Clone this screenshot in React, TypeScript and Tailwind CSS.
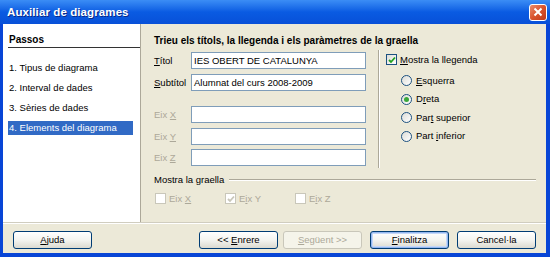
import React from "react";

const font = "font-['Liberation_Sans',Arial,sans-serif]";

function U({ children }: { children: React.ReactNode }) {
  return <span className="underline underline-offset-[1px]">{children}</span>;
}

function Check({ checked, disabled }: { checked?: boolean; disabled?: boolean }) {
  return (
    <span
      className={
        "w-[11px] h-[11px] border flex items-center justify-center shrink-0 " +
        (disabled ? "border-[#c9c7ba] bg-white" : "border-[#1c5180] bg-gradient-to-br from-[#dcdcd7] to-white")
      }
    >
      {checked && (
        <svg width="8" height="8" viewBox="0 0 8 8">
          <path d="M1 4 L3 6 L7 1.5" fill="none" stroke={disabled ? "#c9c7ba" : "#21a121"} strokeWidth="1.8" />
        </svg>
      )}
    </span>
  );
}

function Radio({ checked, label }: { checked?: boolean; label: React.ReactNode }) {
  return (
    <div className="flex items-center h-[13px]">
      <span className="w-[11px] h-[11px] rounded-full border border-[#1c5180] bg-gradient-to-br from-[#dcdcd7] to-white flex items-center justify-center">
        {checked && <span className="w-[5px] h-[5px] rounded-full bg-[#3aa83a]" />}
      </span>
      <span className="ml-[4px] text-[#000]">{label}</span>
    </div>
  );
}

function Field({ label, value, disabled, className }: { label: React.ReactNode; value?: string; disabled?: boolean; className?: string }) {
  return (
    <div className={"flex items-center h-[17px] " + (className ?? "")}>
      <span className={"w-[37px] " + (disabled ? "text-[#aca899]" : "text-black")}>{label}</span>
      <div className="w-[175px] h-[17px] border border-[#7f9db9] bg-white flex items-center px-[2px] text-black">{value}</div>
    </div>
  );
}

function Btn({ children, disabled, focus }: { children: React.ReactNode; disabled?: boolean; focus?: boolean }) {
  return (
    <div
      className={
        "w-[79px] h-[18px] rounded-[3px] border flex items-center justify-center " +
        (disabled
          ? "border-[#c9c7ba] bg-[#f5f4ea] text-[#aca899]"
          : "border-[#003c74] bg-gradient-to-b from-white via-[#f4f4f0] to-[#dcdad0] text-black") +
        (focus ? " shadow-[inset_0_0_0_1px_#94b7f0,inset_0_0_0_2px_#c4d7f7]" : "")
      }
    >
      {children}
    </div>
  );
}

export default function App() {
  return (
    <div className={"w-[550px] h-[257px] flex flex-col bg-[#0845d6] text-[9.5px] leading-[12px] " + font}>
      {/* title bar */}
      <div className="h-[24px] shrink-0 flex items-center pl-[7px] pr-[3px] bg-gradient-to-b from-[#3b8df5] via-[#0a5be2] to-[#0850d8]">
        <span className="text-white text-[11.5px] font-bold tracking-[0.1px] [text-shadow:1px_1px_0_#0a2a8a]">Auxiliar de diagrames</span>
        <div className="ml-auto w-[18px] h-[17px] rounded-[3px] border border-white bg-gradient-to-br from-[#e98b6b] via-[#d9532d] to-[#c0391a] flex items-center justify-center">
          <svg width="10" height="10" viewBox="0 0 10 10">
            <path d="M1.5 1.5 L8.5 8.5 M8.5 1.5 L1.5 8.5" stroke="white" strokeWidth="2" />
          </svg>
        </div>
      </div>

      {/* body */}
      <div className="flex-1 flex flex-col ml-[3px] mr-[4px] mb-[4px] bg-[#ece9d8]">
        <div className="h-[198px] flex">
          {/* steps */}
          <div className="w-[138px] bg-white border-r border-[#aca899] pl-[5px] pr-[7px]">
            <div className="mt-[10px] pl-[1px] font-bold text-[10px] text-black border-b border-[#333] pb-[1px] -mr-[7px]">Passos</div>
            <div className="mt-[13px] pl-[1px] h-[14px] flex items-center text-black">1. Tipus de diagrama</div>
            <div className="mt-[6px] pl-[1px] h-[14px] flex items-center text-black">2. Interval de dades</div>
            <div className="mt-[6px] pl-[1px] h-[14px] flex items-center text-black">3. Sèries de dades</div>
            <div className="mt-[6px] pl-[1px] h-[14px] flex items-center text-white bg-[#316ac5]">4. Elements del diagrama</div>
          </div>

          {/* settings */}
          <div className="flex-1 pl-[13px] pr-[10px]">
            <div className="mt-[11px] h-[12px] font-bold text-[10px] text-black">
              Trieu els títols, la llegenda i els paràmetres de la graella
            </div>
            <div className="flex mt-[5px]">
              <div className="flex flex-col">
                <Field label={<><U>T</U>ítol</>} value="IES OBERT DE CATALUNYA" />
                <Field className="mt-[5px]" label={<><U>S</U>ubtítol</>} value="Alumnat del curs 2008-2009" />
                <Field className="mt-[15px]" disabled label={<>Eix <U>X</U></>} />
                <Field className="mt-[5px]" disabled label={<>Eix <U>Y</U></>} />
                <Field className="mt-[4px]" disabled label={<>Eix <U>Z</U></>} />
              </div>
              <div className="ml-[12px] -mt-[2px] h-[118px] w-[2px] border-l border-[#aca899] border-r border-r-white" />
              <div className="ml-[6px] flex flex-col">
                <div className="flex items-center h-[13px] mt-[1px]">
                  <Check checked />
                  <span className="ml-[3px] text-black"><U>M</U>ostra la llegenda</span>
                </div>
                <div className="ml-[15px] flex flex-col gap-[5.5px] mt-[8px]">
                  <Radio label={<><U>E</U>squerra</>} />
                  <Radio checked label={<>D<U>r</U>eta</>} />
                  <Radio label={<>Par<U>t</U> superior</>} />
                  <Radio label={<>Part <U>i</U>nferior</>} />
                </div>
              </div>
            </div>
            <div className="flex items-center mt-[6px] h-[12px]">
              <span className="text-black">Mostra la graella</span>
              <div className="ml-[5px] flex-1 h-[2px] border-t border-[#aca899] border-b border-b-white" />
            </div>
            <div className="flex items-center mt-[6px] h-[13px] pl-[1px] text-[#aca899]">
              <div className="flex items-center w-[70px]">
                <Check disabled />
                <span className="ml-[3px]">Eix <U>X</U></span>
              </div>
              <div className="flex items-center w-[70px]">
                <Check disabled checked />
                <span className="ml-[3px]">E<U>i</U>x Y</span>
              </div>
              <div className="flex items-center">
                <Check disabled />
                <span className="ml-[3px]">E<U>i</U>x Z</span>
              </div>
            </div>
          </div>
        </div>

        <div className="h-[2px] border-t border-[#d0cdbf] border-b border-b-white" />

        {/* buttons */}
        <div className="flex items-start pt-[7px] pl-[10px] pr-[10px]">
          <Btn><><U>A</U>juda</></Btn>
          <div className="ml-auto flex">
            <Btn>&lt;&lt;&nbsp;<U>E</U>nrere</Btn>
            <div className="ml-[5px]">
              <Btn disabled><><U>S</U>egüent &gt;&gt;</></Btn>
            </div>
            <div className="ml-[8px]">
              <Btn focus><><U>F</U>inalitza</></Btn>
            </div>
            <div className="ml-[8px]">
              <Btn>Cancel·la</Btn>
            </div>
          </div>
        </div>
      </div>
    </div>
  );
}
